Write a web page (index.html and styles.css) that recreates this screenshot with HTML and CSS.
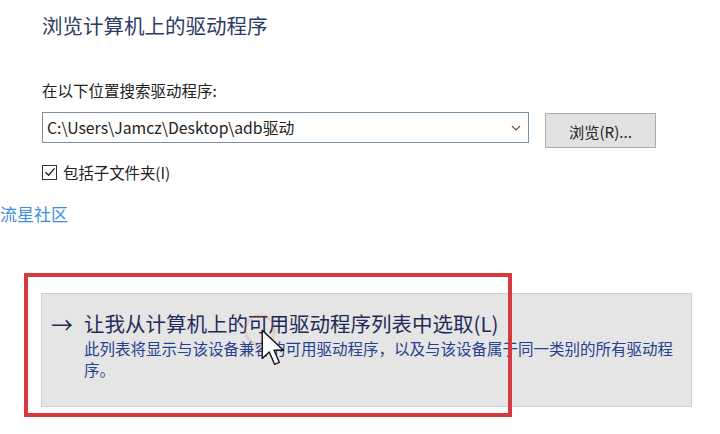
FILE: index.html
```html
<!DOCTYPE html>
<html lang="zh-CN">
<head>
    <meta charset="UTF-8">
    <meta name="viewport" content="width=device-width, initial-scale=1.0">
    <title>浏览计算机上的驱动程序</title>
    <link rel="stylesheet" href="styles.css">
</head>
<body>
    <div class="page">
        <h1 class="title">浏览计算机上的驱动程序</h1>

        <div class="search">
            <label for="path" class="label">在以下位置搜索驱动程序:</label>
            <div class="row">
                <div class="combo">
                    <input type="text" id="path" value="C:\Users\Jamcz\Desktop\adb驱动">
                    <svg class="chevron" width="10" height="6" viewBox="0 0 10 6">
                        <path d="M1 1 L5 5 L9 1" fill="none" stroke="#555" stroke-width="1.2"/>
                    </svg>
                </div>
                <button class="browse">浏览(R)...</button>
            </div>
            <label class="check">
                <span class="box">
                    <svg width="12" height="12" viewBox="0 0 12 12">
                        <path d="M1.5 6.2 L4.6 9.2 L10.6 2.4" fill="none" stroke="#222" stroke-width="1.4"/>
                    </svg>
                </span>
                包括子文件夹(I)
            </label>
        </div>

        <div class="watermark">流星社区</div>

        <div class="pick-area">
            <div class="option">
                <div class="option-title"><span class="arrow">→</span>让我从计算机上的可用驱动程序列表中选取(L)</div>
                <p class="option-desc">此列表将显示与该设备兼容的可用驱动程序，以及与该设备属于同一类别的所有驱动程序。</p>
            </div>
            <div class="highlight"></div>
            <div class="click-ring"></div>
            <svg class="cursor" width="26" height="40" viewBox="0 0 22 34">
                <path d="M1 1 L1 25 L7 19.5 L11.5 30 L15.5 28.3 L11 18 L19 18 Z" fill="#fff" stroke="#111" stroke-width="1.2" stroke-linejoin="round"/>
            </svg>
        </div>
    </div>
</body>
</html>
```

FILE: styles.css
```css
body {
    margin: 0;
    background: #fff;
    font-family: "Noto Sans CJK SC", "Noto Sans", sans-serif;
    color: #1e1e1e;
}
.page {
    width: 720px;
    height: 434px;
    overflow: hidden;
}
.title {
    margin: 0;
    padding: 10px 0 0 42px;
    font-size: 20.5px;
    font-weight: normal;
    line-height: 30px;
    color: #2d3b63;
}
.search {
    padding: 40px 0 0 42px;
}
.label {
    display: block;
    font-size: 15.5px;
    line-height: 20px;
    color: #222;
}
.row {
    display: flex;
    align-items: flex-start;
    gap: 16px;
    margin-top: 12px;
}
.combo {
    position: relative;
    width: 487px;
    height: 31px;
    box-sizing: border-box;
    border: 1px solid #7790a8;
    background: #fff;
}
.combo input {
    width: 100%;
    height: 100%;
    box-sizing: border-box;
    border: none;
    outline: none;
    padding: 0 0 0 4px;
    font-family: "Noto Sans CJK SC", "Noto Sans", sans-serif;
    font-size: 15.8px;
    color: #222;
    background: transparent;
}
.chevron {
    position: absolute;
    right: 7px;
    top: 12px;
}
.browse {
    width: 111px;
    height: 35px;
    margin-top: 1px;
    border: 1px solid #adadad;
    background: #e1e1e1;
    font-family: "Noto Sans CJK SC", "Noto Sans", sans-serif;
    font-size: 15.2px;
    color: #222;
    padding: 0;
}
.check {
    display: flex;
    align-items: center;
    gap: 6px;
    margin-top: 14px;
    font-size: 15.4px;
    line-height: 20px;
    color: #222;
}
.box {
    display: flex;
    align-items: center;
    justify-content: center;
    width: 13px;
    height: 13px;
    border: 1px solid #333;
}
.watermark {
    margin-top: 22px;
    font-size: 17px;
    line-height: 20px;
    color: #3d8de0;
}
.pick-area {
    position: relative;
    padding: 69px 0 0 41px;
}
.option {
    width: 651px;
    height: 114px;
    box-sizing: border-box;
    border: 1px solid #cfcfcf;
    background: #e5e5e5;
    padding: 15px 8px 0 9px;
}
.option-title {
    display: flex;
    align-items: center;
    font-size: 20.5px;
    line-height: 28px;
    color: #1f2b58;
}
.arrow {
    width: 33px;
    font-size: 22px;
    color: #1f2b58;
}
.option-desc {
    margin: 1px 0 0 33px;
    font-size: 15.5px;
    line-height: 21px;
    color: #23418f;
}
.highlight {
    position: absolute;
    left: 24px;
    top: 49px;
    width: 488px;
    height: 144px;
    box-sizing: border-box;
    border: 4px solid #d63a40;
}
.click-ring {
    position: absolute;
    left: 244px;
    top: 90px;
    width: 26px;
    height: 26px;
    border-radius: 50%;
    border: 3px solid rgba(220, 90, 90, 0.18);
}
.cursor {
    position: absolute;
    left: 261px;
    top: 105px;
}
```
